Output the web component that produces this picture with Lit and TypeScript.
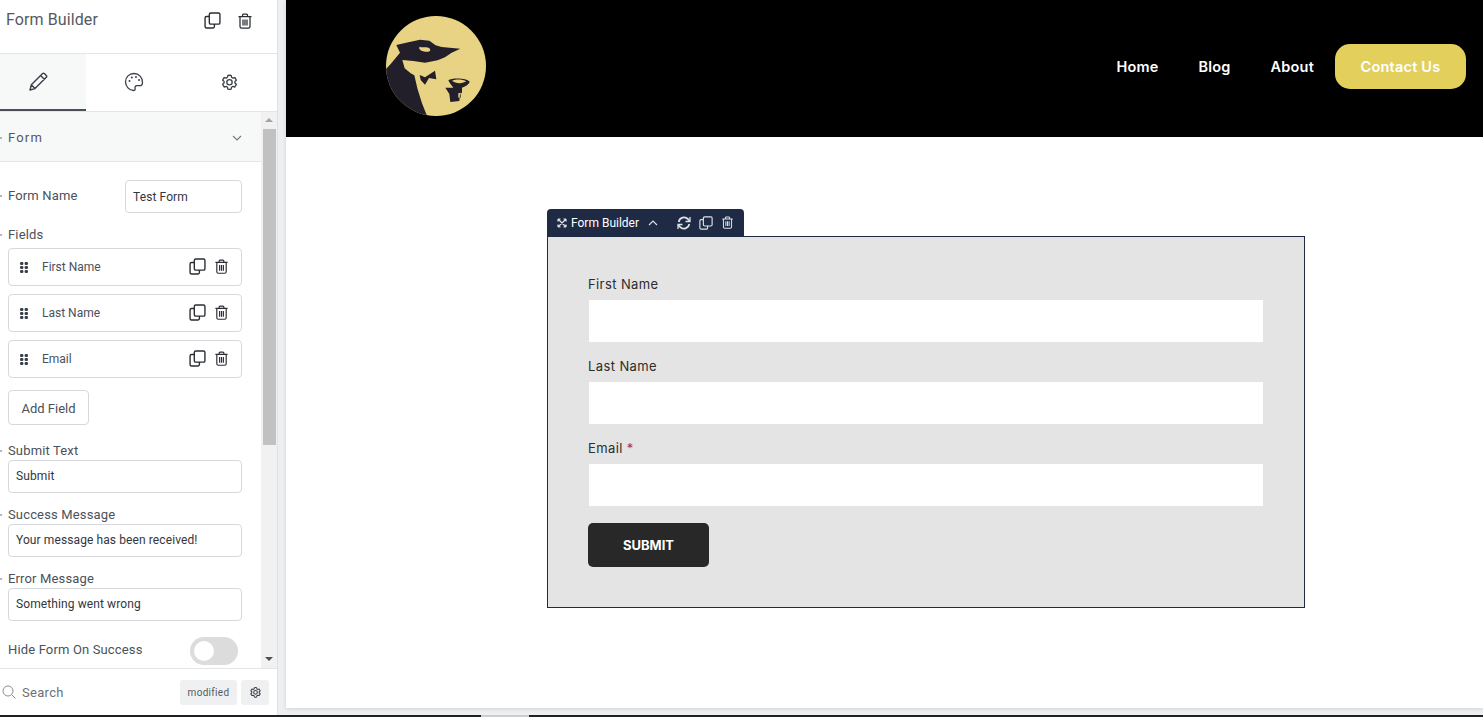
import { LitElement, html, css, svg } from "lit";
import { customElement } from "lit/decorators.js";

const copyIcon = (size: number) => html`<svg class="ic" width=${size} height=${size} viewBox="0 0 16 16" fill="none" stroke="currentColor" stroke-width="1.3"><path d="M5 4.2H2.4A1.4 1.4 0 0 0 1 5.6v8A1.400 1.400 0 0 0 2.400 15h6a1.400 1.400 0 0 0 1.400-1.400v-2.200"/><rect x="5" y="1" width="10" height="10.400" rx="1.400"/></svg>`;
const trashIcon = (size: number) => html`<svg class="ic" width=${size} height=${size} viewBox="0 0 16 16" fill="none" stroke="currentColor" stroke-width="1.250"><path d="M1.500 3.600h13M5.500 3.400V2.200a1 1 0 0 1 1-1h3a1 1 0 0 1 1 1v1.200M3 3.600v10a1.600 1.600 0 0 0 1.600 1.600h6.800a1.600 1.600 0 0 0 1.600-1.600v-10M6 6.400v6M8 6.400v6M10 6.400v6"/></svg>`;
const gearPath = svg`<path d="M10 1.600c.6 0 1.200.1 1.700.2l.4 1.900 1.500.9 1.900-.6c.7.8 1.300 1.700 1.700 2.800l-1.500 1.300v1.800l1.500 1.300c-.4 1-1 2-1.700 2.800l-1.900-.6-1.500.9-.4 1.900c-1.100.3-2.300.3-3.400 0l-.4-1.900-1.500-.9-1.900.6c-.7-.8-1.300-1.800-1.700-2.800l1.500-1.300V8.100L2.800 6.800c.4-1.100 1-2 1.700-2.800l1.900.6 1.500-.9.4-1.900c.5-.1 1.100-.2 1.700-.2z"/><circle cx="10" cy="9" r="2.800"/>`;
const gearIcon = (size: number, w = 1.4) => html`<svg class="ic" width=${size} height=${size} viewBox="0 0 20 18.500" fill="none" stroke="currentColor" stroke-width=${w} stroke-linejoin="round">${gearPath}</svg>`;
const grip = html`<svg class="grip" width="8" height="11" viewBox="0 0 8 11" fill="#3a3f48"><rect x="0" y="0" width="3.400" height="3" rx="1.200"/><rect x="4.600" y="0" width="3.400" height="3" rx="1.200"/><rect x="0" y="4" width="3.400" height="3" rx="1.200"/><rect x="4.600" y="4" width="3.400" height="3" rx="1.200"/><rect x="0" y="8" width="3.400" height="3" rx="1.200"/><rect x="4.600" y="8" width="3.400" height="3" rx="1.200"/></svg>`;

const logo = html`<svg class="logo" width="100" height="100" viewBox="48 48 300 300">
  <defs><clipPath id="c"><circle cx="198" cy="198" r="150"/></clipPath></defs>
  <circle cx="198" cy="198" r="150" fill="#e8d384"/>
  <g clip-path="url(#c)" fill="#221f2a">
    <path d="M40 215 L62 192 L90 158 L79 135 L115 127 L150 119 L178 122 L197 136 L215 141 L271 146 L245 158 L225 172 L203 181 L165 188 L130 183 L97 180 L104 205 L122 220 L133 226 L142 265 L156 310 L176 360 L40 360 Z"/>
    <path d="M149 225 L165 232 L195 212 L199 238 L177 234 L165 254 L152 240 Z"/>
    <path fill-rule="evenodd" d="M235 241 C245 233 290 233 299 245 C297 254 285 259 276 263 L276 278 L270 282 L268 303 L241 306 L238 282 L226 263 L250 263 C244 256 238 248 235 241 Z M246 242 C256 251 277 252 289 244 C276 237 258 237 246 242 Z M265 280 L265 293 L272 293 L272 278 Z"/>
  </g>
  <ellipse cx="164" cy="147" rx="17" ry="8" fill="#e8d384" transform="rotate(12 164 147)"/>
  <path d="M148 139 L184 136 L180 142 L152 142 Z" fill="#221f2a"/>
</svg>`;

@customElement("app-root")
export class AppRoot extends LitElement {
  static styles = css`
    :host { display: block; height: 717px; overflow: hidden; position: relative; background: #eeeff0; font-family: Roboto, "Liberation Sans", sans-serif; }
    .page { display: flex; height: 715px; }
    .sidebar { width: 277px; flex: none; display: flex; flex-direction: column; background: #fff; border-right: 1px solid #dfe1e3; }
    .head { flex: none; display: flex; align-items: center; padding: 0 24px 14px 6px; box-sizing: border-box; border-bottom: 1px solid #e3e5e7; height: 54px; color: #2a2d33; }
    .head .title { flex: 1; font-size: 16px; color: #555a62; letter-spacing: .1px; }
    .head .acts { display: flex; gap: 16px; align-items: center; padding-top: 2px; }
    .tabs { height: 58px; flex: none; display: flex; border-bottom: 1px solid #e3e5e7; box-sizing: border-box; color: #3a3f48; }
    .tab { flex: none; display: flex; align-items: center; justify-content: center; padding-bottom: 1px; box-sizing: border-box; }
    .tab.a { width: 86px; background: #f7f8f8; border-bottom: 2px solid #4a4f5a; padding-right: 10px; padding-bottom: 0; }
    .tab.b { width: 96px; }
    .tab.c { width: 95px; }
    .panel { flex: 1; min-height: 0; display: flex; overflow: hidden; }
    .content { width: 261px; flex: none; overflow: hidden; }
    .sect { height: 50px; box-sizing: border-box; background: #f7f8f8; border-bottom: 1px solid #e3e5e7; display: flex; align-items: center; justify-content: space-between; padding: 2px 19px 0 8px; font-size: 13px; letter-spacing: 1.200px; color: #555a62; }
    .body { padding: 18px 19px 0 8px; display: flex; flex-direction: column; position: relative; }
    label { font-size: 13px; color: #4b515a; letter-spacing: .15px; position: relative; line-height: 16px; display: block; }
    .dot { position: relative; }
    .dot::before { content: ""; position: absolute; left: -8px; top: 7px; width: 2px; height: 2px; background: #9aa0a8; border-radius: 50%; }
    .row { display: flex; align-items: center; justify-content: space-between; }
    .inp { border: 1px solid #d5d8dc; border-radius: 4px; box-sizing: border-box; height: 33px; display: flex; align-items: center; padding: 0 7px 1px; font-size: 12px; letter-spacing: .1px; color: #33363c; background: #fff; }
    .short { width: 117px; padding-bottom: 0; }
    .fields { display: flex; flex-direction: column; gap: 8px; margin-top: 6px; }
    .field { height: 38px; box-sizing: border-box; border: 1px solid #d5d8dc; border-radius: 4px; display: flex; align-items: center; padding: 0 12px 0 11px; font-size: 12px; color: #4b515a; }
    .field .n { flex: 1; margin-left: 14px; }
    .field .ic { color: #2a2d33; }
    .field .cp { display: flex; margin: 0 0 1px 0; }
    .field .tr { margin: 0 0 2px 8px; display: flex; }
    .add { margin-top: 12px; width: 81px; height: 35px; box-sizing: border-box; border: 1px solid #d5d8dc; border-radius: 4px; padding-top: 1px; font-size: 13px; color: #4b515a; display: flex; align-items: center; justify-content: center; }
    .toggle { width: 48px; height: 28px; border-radius: 14px; background: #dcdcdc; margin-right: 4px; position: relative; }
    .toggle::after { content: ""; position: absolute; left: 4px; top: 4px; width: 20px; height: 20px; background: #fff; border-radius: 50%; }
    .scroll { width: 16px; flex: none; background: #f1f1f1; display: flex; flex-direction: column; align-items: center; }
    .sb-up { width: 0; height: 0; border: 4px solid transparent; border-top: 0; border-bottom: 4px solid #a3a3a3; margin-top: 6px; }
    .sb-thumb { width: 13px; height: 316px; background: #c1c1c1; margin-top: 7px; }
    .sb-down { width: 0; height: 0; border: 4px solid transparent; border-bottom: 0; border-top: 4px solid #505050; margin-top: 212px; }
    .foot { height: 47px; flex: none; box-sizing: border-box; border-top: 1px solid #e3e5e7; display: flex; align-items: center; padding: 0 8px 0 2px; font-size: 13px; color: #6c7178; }
    .foot .s { margin-left: 6px; flex: 1; letter-spacing: .3px; }
    .chip { background: #eff0f1; border-radius: 3px; height: 25px; display: flex; align-items: center; justify-content: center; font-size: 10px; color: #555a62; letter-spacing: .3px; }
    .chip.m { width: 57px; margin-right: 4px; }
    .chip.g { width: 28px; color: #3a3f48; }
    .main { flex: 1; margin-left: 8px; display: flex; flex-direction: column; height: 708px; background: #fff; box-shadow: 0 1px 4px rgba(0,0,0,.12); min-width: 0; }
    .hdr { height: 137px; flex: none; background: #000; display: flex; align-items: center; justify-content: space-between; padding: 0 17px 5px 100px; box-sizing: border-box; font-family: "Inter", sans-serif; }
    .logo { display: block; }
    .nav { display: flex; align-items: center; color: #fff; font-size: 14.500px; font-weight: 600; letter-spacing: .2px; }
    .nav span { margin-right: 40px; }
    .nav span:nth-child(3) { margin-right: 21px; }
    .cta { width: 131px; height: 45px; border-radius: 15px; background: #e2cf5c; display: flex; align-items: center; justify-content: center; }
    .stage { padding: 72px 178px 0 261px; flex: 1; }
    .tb { width: 197px; height: 27px; box-sizing: border-box; background: #1f2a44; border-radius: 4px 4px 0 0; color: #fff; display: flex; align-items: center; padding: 0 9px 0 10px; font-size: 12px; font-family: Roboto, sans-serif; }
    .tb .t { margin-left: 4px; }
    .tb .up { margin-left: 9px; margin-right: 19px; }
    .tb .ic { color: #dfe2e8; }
    .tb .ic + .ic { margin-left: 8px; }
    .card { height: 372px; box-sizing: border-box; border: 1px solid #1f2a44; background: #e4e4e4; padding: 38px 41px 0 40px; font-family: "Inter", sans-serif; }
    .fl { height: 82px; box-sizing: border-box; }
    .fl .l { font-size: 13px; line-height: 18px; color: #2c2c2c; letter-spacing: .4px; }
    .fl .l b { color: #a33; font-weight: 400; }
    .fl .i { background: #fff; height: 42px; margin: 7px 0 0 1px; }
    .submit { width: 121px; height: 44px; border-radius: 5px; background: #282828; color: #fff; font-size: 13px; font-weight: 700; display: flex; align-items: center; justify-content: center; margin-top: 2px; }
    .bot { position: absolute; left: 0; right: 0; bottom: 0; height: 2px; background: #1d2024; }
    .bot i { position: absolute; left: 481px; width: 48px; top: 0; bottom: 0; background: #c9ced3; }
  `;

  private field(n: string) {
    return html`<div class="field">${grip}<span class="n">${n}</span><span class="cp">${copyIcon(17)}</span><span class="tr">${trashIcon(15)}</span></div>`;
  }
  private formField(l: unknown) {
    return html`<div class="fl"><div class="l">${l}</div><div class="i"></div></div>`;
  }

  render() {
    return html`
      <div class="page">
        <aside class="sidebar">
          <div class="head"><span class="title">Form Builder</span>
            <span class="acts">${copyIcon(17)}${trashIcon(16)}</span></div>
          <div class="tabs">
            <div class="tab a"><svg width="20" height="20" viewBox="0 0 20 20" fill="none" stroke="currentColor" stroke-width="1.400" stroke-linejoin="round"><path d="M2 18l1.300-5.200L14.600 1.600c.5-.5 1.200-.5 1.700 0l2 2c.5.5.5 1.200 0 1.700L7 16.600 2 18zM3.300 12.800l3.900 3.900M12.600 3.600l3.900 3.900"/></svg></div>
            <div class="tab b"><svg width="20" height="20" viewBox="0 0 20 20" fill="none" stroke="currentColor" stroke-width="1.300"><path d="M10 1.500c-4.800 0-8.500 3.600-8.500 8.300s3.800 8.700 8 8.700c1.400 0 1.900-1 1.600-2-.4-1.300.2-2.800 1.800-2.800h2.400c1.700 0 3.200-1.300 3.200-3.300C18.500 5.500 15 1.500 10 1.500z"/><circle cx="5.500" cy="9" r="1" fill="currentColor" stroke="none"/><circle cx="7.800" cy="5.500" r="1" fill="currentColor" stroke="none"/><circle cx="12" cy="5" r="1" fill="currentColor" stroke="none"/><circle cx="15" cy="8" r="1" fill="currentColor" stroke="none"/></svg></div>
            <div class="tab c">${gearIcon(19)}</div>
          </div>
          <div class="panel">
            <div class="content">
              <div class="sect"><span class="dot">Form</span>
                <svg width="10" height="6" viewBox="0 0 10 6" fill="none" stroke="#777" stroke-width="1.100"><path d="M1 1l4 4 4-4"/></svg></div>
              <div class="body">
                <div class="row"><label class="dot" style="margin-top:-1px">Form Name</label><div class="inp short">Test Form</div></div>
                <label class="dot" style="margin-top:13px;top:1px">Fields</label>
                <div class="fields">${this.field("First Name")}${this.field("Last Name")}${this.field("Email")}</div>
                <div class="add">Add Field</div>
                <label class="dot" style="margin-top:17px;margin-bottom:2px;top:1px">Submit Text</label>
                <div class="inp">Submit</div>
                <label class="dot" style="margin-top:13px;margin-bottom:2px;top:1px">Success Message</label>
                <div class="inp">Your message has been received!</div>
                <label class="dot" style="margin-top:13px;margin-bottom:2px;top:1px">Error Message</label>
                <div class="inp">Something went wrong</div>
                <div class="row" style="margin-top:16px"><label style="top:-1px">Hide Form On Success</label><div class="toggle"></div></div>
              </div>
            </div>
            <div class="scroll"><div class="sb-up"></div><div class="sb-thumb"></div><div class="sb-down"></div></div>
          </div>
          <div class="foot">
            <svg width="14" height="14" viewBox="0 0 14 14" fill="none" stroke="#8a8f96" stroke-width="1"><circle cx="6" cy="6" r="5"/><path d="M9.700 9.700L13.500 13.500"/></svg>
            <span class="s">Search</span>
            <span class="chip m">modified</span>
            <span class="chip g">${gearIcon(13, 1.6)}</span>
          </div>
        </aside>
        <main class="main">
          <header class="hdr">${logo}
            <nav class="nav"><span>Home</span><span>Blog</span><span>About</span><div class="cta">Contact Us</div></nav>
          </header>
          <section class="stage">
            <div class="tb">
              <svg width="10" height="10" viewBox="0 0 10 10" fill="none" stroke="#dfe2e8" stroke-width="1.200"><path d="M1 1l8 8M9 1L1 9M1 1h2.500M1 1v2.500M9 1H6.500M9 1v2.500M1 9h2.500M1 9V6.500M9 9H6.500M9 9V6.500"/></svg>
              <span class="t">Form Builder</span>
              <svg class="up" width="10" height="6" viewBox="0 0 10 6" fill="none" stroke="#dfe2e8" stroke-width="1.100"><path d="M1 5l4-4 4 4"/></svg>
              <svg class="ic" width="14" height="14" viewBox="0 0 14 14" fill="none" stroke="currentColor" stroke-width="1.800"><path d="M1.800 6A5.300 5.300 0 0 1 11 3.200L12.500 5M12.200 8A5.300 5.300 0 0 1 3 10.800L1.500 9"/><path d="M13 1v4.500H8.500M1 13V8.500h4.500" stroke-width="1.300"/></svg>
              ${copyIcon(14)}
              ${trashIcon(13)}
            </div>
            <div class="card">
              ${this.formField("First Name")}
              ${this.formField("Last Name")}
              ${this.formField(html`Email <b>*</b>`)}
              <div class="submit">SUBMIT</div>
            </div>
          </section>
        </main>
      </div>
      <div class="bot"><i></i></div>
    `;
  }
}
